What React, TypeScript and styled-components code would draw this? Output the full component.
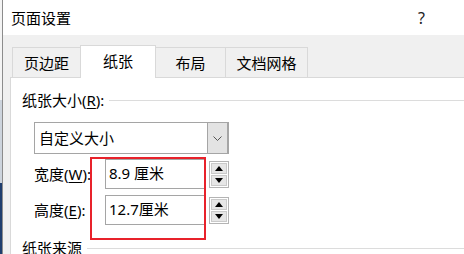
import React from 'react'
import styled, { createGlobalStyle } from 'styled-components'

const GlobalStyle = createGlobalStyle`
  html, body {
    margin: 0;
    padding: 0;
    width: 464px;
    height: 254px;
    overflow: hidden;
    background: #fff;
  }
  body {
    font-family: "Noto Sans", "Noto Sans CJK SC", sans-serif;
    font-size: 15px;
    color: #000;
  }
`

const Screen = styled.div`
  display: flex;
  width: 464px;
  height: 254px;
`

// what shows of the desktop behind the dialog
const Backdrop = styled.div`
  width: 2px;
  background: linear-gradient(
    to bottom,
    #f4f4f4 0,
    #f4f4f4 100px,
    #cdd4dd 100px,
    #cdd4dd 183px,
    #1f3e6e 183px,
    #1f3e6e 100%
  );
`

const Dialog = styled.div`
  flex: 1;
  display: flex;
  flex-direction: column;
  border-left: 1px solid #8c8c8c;
  min-width: 0;
`

const TitleBar = styled.div`
  height: 35px;
  flex: none;
  display: flex;
  align-items: center;
  justify-content: space-between;
  padding-left: 8px;
  background: #fff;
  line-height: 20px;
`

const Help = styled.span`
  margin-right: 39px;
  font-size: 16px;
  color: #222;
`

const Body = styled.div`
  flex: 1;
  display: flex;
  flex-direction: column;
  background: #f0f0f0;
  padding: 10px 0 0 7px;
`

const TabRow = styled.div`
  position: relative;
  z-index: 1;
  display: flex;
  align-items: flex-end;
  height: 33px;
  margin-bottom: -1px;
  padding-left: 2px;
`

const Tab = styled.div<{ $w: number; $active?: boolean }>`
  box-sizing: border-box;
  width: ${p => p.$w}px;
  height: ${p => (p.$active ? 33 : 30)}px;
  margin-bottom: ${p => (p.$active ? 0 : 1)}px;
  display: flex;
  align-items: center;
  justify-content: center;
  padding-bottom: ${p => (p.$active ? 3 : 0)}px;
  border: 1px solid #d9d9d9;
  border-bottom: none;
  background: ${p => (p.$active ? '#fff' : '#f0f0f0')};
  line-height: 20px;
  & + & {
    margin-left: -1px;
  }
`

const Panel = styled.div`
  flex: 1;
  background: #fff;
  border-top: 1px solid #d9d9d9;
  border-left: 1px solid #d9d9d9;
  padding: 12px 0 0 11px;
`

const GroupHeading = styled.div<{ $gap?: number }>`
  display: flex;
  align-items: center;
  height: 20px;
  line-height: 20px;
  margin-top: ${p => p.$gap ?? 0}px;
  white-space: nowrap;
  &::after {
    content: '';
    flex: 1;
    height: 1px;
    margin-left: 5px;
    background: #dcdcdc;
  }
`

const Key = styled.span`
  text-decoration: underline;
  text-underline-offset: 2px;
`

const Fields = styled.div`
  padding-left: 12px;
`

const Select = styled.div`
  box-sizing: border-box;
  display: flex;
  width: 195px;
  height: 32px;
  margin-top: 12px;
  border: 1px solid #a5a5a5;
  border-right-width: 2px;
  background: #fff;
`

const SelectText = styled.div`
  flex: 1;
  display: flex;
  align-items: center;
  padding-left: 4px;
  line-height: 20px;
`

const SelectButton = styled.div`
  width: 19px;
  display: flex;
  align-items: center;
  justify-content: center;
  background: #e3e3e3;
  border-left: 1px solid #a5a5a5;
`

const Rows = styled.div`
  position: relative;
  margin-top: 5px;
  display: flex;
  flex-direction: column;
  gap: 6px;
`

const SizeRow = styled.div`
  display: flex;
  align-items: center;
`

const Label = styled.div`
  width: 71px;
  line-height: 20px;
  white-space: nowrap;
`

const Input = styled.div`
  box-sizing: border-box;
  width: 100px;
  height: 30px;
  display: flex;
  align-items: center;
  padding-left: 3px;
  padding-bottom: 2px;
  border: 1px solid #a5a5a5;
  line-height: 20px;
`

const Spin = styled.div`
  box-sizing: border-box;
  width: 20px;
  height: 27px;
  margin-left: 4px;
  padding: 1px;
  display: flex;
  flex-direction: column;
  gap: 1px;
  border: 1px solid #b4b4b4;
`

const SpinButton = styled.div`
  flex: 1;
  display: flex;
  align-items: center;
  justify-content: center;
  background: #e6e6e6;
  border: 1px solid #cacaca;
`

// red annotation frame drawn over the two inputs
const Highlight = styled.div`
  position: absolute;
  left: 56px;
  top: -2px;
  width: 116px;
  height: 83px;
  box-sizing: border-box;
  border: 2px solid #e8222b;
  pointer-events: none;
`

const Arrow = ({ up }: { up?: boolean }) => (
  <svg width="8" height="5" viewBox="0 0 8 5">
    <polygon points={up ? '0,5 8,5 4,0' : '0,0 8,0 4,5'} fill="#000" />
  </svg>
)

const Chevron = () => (
  <svg width="9" height="5" viewBox="0 0 9 5">
    <polyline points="0.5,0.5 4.5,4.5 8.5,0.5" fill="none" stroke="#555" strokeWidth="1" />
  </svg>
)

const SizeField = ({ label, k, value }: { label: string; k: string; value: string }) => (
  <SizeRow>
    <Label>
      {label}(<Key>{k}</Key>):
    </Label>
    <Input>{value}</Input>
    <Spin>
      <SpinButton>
        <Arrow up />
      </SpinButton>
      <SpinButton>
        <Arrow />
      </SpinButton>
    </Spin>
  </SizeRow>
)

const tabs = [
  { name: '页边距', w: 69 },
  { name: '纸张', w: 76, active: true },
  { name: '布局', w: 71 },
  { name: '文档网格', w: 83 },
]

const App = () => (
  <Screen>
    <GlobalStyle />
    <Backdrop />
    <Dialog>
      <TitleBar>
        <span>页面设置</span>
        <Help>?</Help>
      </TitleBar>
      <Body>
        <TabRow>
          {tabs.map(t => (
            <Tab key={t.name} $w={t.w} $active={t.active}>
              {t.name}
            </Tab>
          ))}
        </TabRow>
        <Panel>
          <GroupHeading>
            <span>
              纸张大小(<Key>R</Key>):
            </span>
          </GroupHeading>
          <Fields>
            <Select>
              <SelectText>自定义大小</SelectText>
              <SelectButton>
                <Chevron />
              </SelectButton>
            </Select>
            <Rows>
              <SizeField label="宽度" k="W" value="8.9 厘米" />
              <SizeField label="高度" k="E" value="12.7厘米" />
              <Highlight />
            </Rows>
          </Fields>
          <GroupHeading $gap={13}>
            <span>纸张来源</span>
          </GroupHeading>
        </Panel>
      </Body>
    </Dialog>
  </Screen>
)

export default App
